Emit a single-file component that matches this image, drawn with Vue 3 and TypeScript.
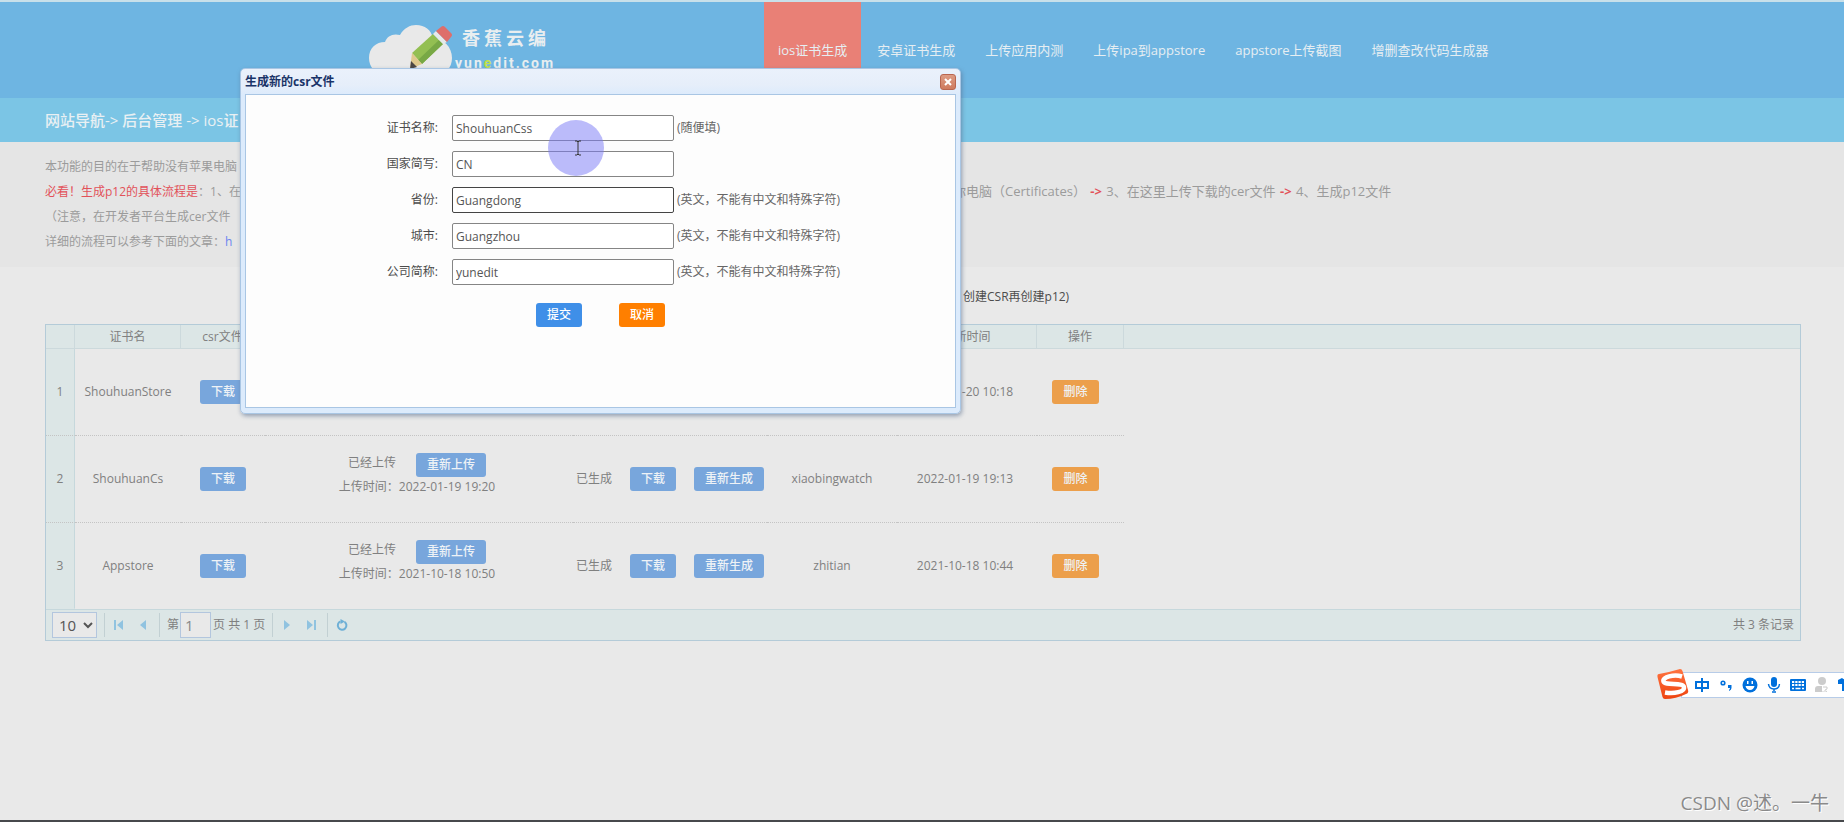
<script setup lang="ts">
import { ref } from 'vue'

interface CertRow {
  name: string
  uploadedAt?: string
  app?: string
  updatedAt: string
}

interface Field {
  id: string
  label: string
  value: string
  hint: string
}

const navItems = ['ios证书生成', '安卓证书生成', '上传应用内测', '上传ipa到appstore', 'appstore上传截图', '增删查改代码生成器']

const rows: CertRow[] = [
  { name: 'ShouhuanStore', updatedAt: '2022-01-20 10:18' },
  { name: 'ShouhuanCs', uploadedAt: '2022-01-19 19:20', app: 'xiaobingwatch', updatedAt: '2022-01-19 19:13' },
  { name: 'Appstore', uploadedAt: '2021-10-18 10:50', app: 'zhitian', updatedAt: '2021-10-18 10:44' },
]

const englishOnly = '(英文，不能有中文和特殊字符)'
const fields = ref<Field[]>([
  { id: 'cert-name', label: '证书名称:', value: 'ShouhuanCss', hint: '(随便填)' },
  { id: 'country', label: '国家简写:', value: 'CN', hint: '' },
  { id: 'province', label: '省份:', value: 'Guangdong', hint: englishOnly },
  { id: 'city', label: '城市:', value: 'Guangzhou', hint: englishOnly },
  { id: 'company', label: '公司简称:', value: 'yunedit', hint: englishOnly },
])
const page = ref('1')
const pageSize = ref('10')
</script>

<template>
  <div class="page">
    <header class="top">
      <div class="top-inner">
        <div class="logo">
          <svg class="cloud" width="86" height="60" viewBox="0 0 86 60" aria-hidden="true">
            <path d="M16 50C6 49 0 42 0 33C0 23 7 17 16 17C18 11 24 8 31 10C35 3 41 0 47 0C56 0 62 5 64 13C75 14 83 22 83 33C83 43 76 50 67 50Z" fill="#e9e9e9" />
            <path d="M64 9L74 19L53 39L43 28Z" fill="#93bf52" />
            <path d="M70 15L74 19L53 39L49 35Z" fill="#78a845" />
            <path d="M43 28L53 39L41 44Z" fill="#dfc98d" />
            <path d="M42 36L48 42L41 44Z" fill="#4c4744" />
            <path d="M67 6L78 17L74 19L64 9Z" fill="#e6e9ea" />
            <path d="M72 2Q74 0 76 2L82 8Q84 10 82 12L78 17L67 6Z" fill="#de6e6b" />
          </svg>
          <div class="brand">
            <span class="brand-cn">香蕉云编</span>
            <span class="brand-en">yun<em>e</em>dit.com</span>
          </div>
        </div>
        <nav class="nav">
          <a v-for="(item, i) in navItems" :key="item" href="#" :class="{ active: i === 0 }">{{ item }}</a>
        </nav>
      </div>
    </header>

    <div class="crumbs">网站导航-&gt; 后台管理 -&gt; ios证</div>

    <section class="info">
      <p>本功能的目的在于帮助没有苹果电脑</p>
      <p class="steps">
        <span><b class="must">必看！生成p12的具体流程是</b>：1、在</span>
        <span class="later">你电脑（Certificates） <b class="arrow">-&gt;</b> 3、在这里上传下载的cer文件 <b class="arrow">-&gt;</b> 4、生成p12文件</span>
      </p>
      <p>（注意，在开发者平台生成cer文件</p>
      <p>详细的流程可以参考下面的文章：<a href="#">h</a></p>
    </section>

    <main class="content">
      <p class="create-note">创建CSR再创建p12)</p>
      <div class="grid">
        <table>
          <colgroup>
            <col class="c-no"><col class="c-name"><col class="c-csr"><col class="c-up"><col class="c-p12"><col class="c-app"><col class="c-time"><col class="c-op"><col>
          </colgroup>
          <thead>
            <tr>
              <th></th><th>证书名</th><th>csr文件</th><th></th><th></th><th></th><th>更新时间</th><th>操作</th><th class="rest"></th>
            </tr>
          </thead>
          <tbody>
            <tr v-for="(row, i) in rows" :key="row.name">
              <td class="no">{{ i + 1 }}</td>
              <td>{{ row.name }}</td>
              <td><button type="button" class="btn">下载</button></td>
              <td class="up">
                <template v-if="row.uploadedAt">
                  <div class="up-line"><span>已经上传</span><button type="button" class="btn">重新上传</button></div>
                  <div>上传时间：{{ row.uploadedAt }}</div>
                </template>
              </td>
              <td>
                <div v-if="row.uploadedAt" class="p12">
                  <span>已生成</span>
                  <button type="button" class="btn">下载</button>
                  <button type="button" class="btn">重新生成</button>
                </div>
              </td>
              <td>{{ row.app }}</td>
              <td class="time">{{ row.updatedAt }}</td>
              <td class="op"><button type="button" class="btn orange">删除</button></td>
              <td class="rest"></td>
            </tr>
          </tbody>
        </table>
        <div class="pager">
          <select v-model="pageSize" aria-label="每页条数"><option>10</option></select>
          <i class="sep"></i>
          <button type="button" class="ico" aria-label="首页"><svg width="10" height="10" viewBox="0 0 10 10"><path d="M0 0h2v10H0zM9 0v10L3 5z" /></svg></button>
          <button type="button" class="ico" aria-label="上一页"><svg width="10" height="10" viewBox="0 0 10 10"><path d="M8 0v10L2 5z" /></svg></button>
          <i class="sep"></i>
          <label for="page-no">第</label>
          <input id="page-no" v-model="page" type="text">
          <span>页 共 1 页</span>
          <i class="sep"></i>
          <button type="button" class="ico" aria-label="下一页"><svg width="10" height="10" viewBox="0 0 10 10"><path d="M2 0v10l6-5z" /></svg></button>
          <button type="button" class="ico" aria-label="末页"><svg width="10" height="10" viewBox="0 0 10 10"><path d="M8 0h2v10H8zM1 0v10l6-5z" /></svg></button>
          <i class="sep"></i>
          <button type="button" class="ico" aria-label="刷新">
            <svg width="12" height="12" viewBox="0 0 12 12"><path d="M4.500 2.400A4.300 4.300 0 1 0 8.500 2.800" fill="none" stroke="#6fb0d6" stroke-width="2" /><path d="M4.500 0l4.500 2.500L4.500 5z" fill="#6fb0d6" /></svg>
          </button>
          <span class="records">共 3 条记录</span>
        </div>
      </div>
    </main>

    <section class="dialog" role="dialog" aria-labelledby="dlg-title">
      <div class="dlg-head">
        <h2 id="dlg-title">生成新的csr文件</h2>
        <button type="button" class="close" aria-label="关闭">
          <svg width="8" height="8" viewBox="0 0 8 8"><path d="M1 1l6 6M7 1L1 7" stroke="#fff" stroke-width="2" /></svg>
        </button>
      </div>
      <form class="dlg-body" @submit.prevent>
        <div v-for="f in fields" :key="f.id" class="field">
          <label :for="f.id">{{ f.label }}</label>
          <input :id="f.id" v-model="f.value" type="text" :class="{ strong: f.id === 'province' }">
          <span>{{ f.hint }}</span>
        </div>
        <div class="actions">
          <button type="submit" class="btn primary">提交</button>
          <button type="button" class="btn cancel">取消</button>
        </div>
      </form>
      <svg class="cursor" width="56" height="56" viewBox="0 0 56 56" aria-hidden="true">
        <circle cx="28" cy="28" r="28" fill="#7777f5" fill-opacity=".5" />
        <path d="M27 21h2l1 1l1-1h2M30 22v12M27 35h2l1-1l1 1h2" fill="none" stroke="#333" stroke-width="1" />
      </svg>
    </section>

    <div class="ime">
      <svg class="sogou" width="32" height="32" viewBox="0 0 32 32" aria-hidden="true">
        <defs><linearGradient id="sg" x1="0" y1="0" x2="0" y2="1"><stop offset="0" stop-color="#ff7440" /><stop offset="1" stop-color="#ee4410" /></linearGradient></defs>
        <path d="M2 5Q13 3 23 0Q25 0 25.500 2L31 21Q32 24 29 25Q19 30 8 30Q6 30 5.500 28L.5 8Q0 5 2 5Z" fill="url(#sg)" />
        <path d="M25 7.500C17 5 5 8 6.500 12.500C8 17 26 13 27 18C28 23 17 25 8 23.500" fill="none" stroke="#fff" stroke-width="4.500" />
      </svg>
      <div class="ime-bar">
        <svg width="16" height="16" viewBox="0 0 16 16"><path d="M2 5h12v6H2zM8 1v14" fill="none" stroke="#0070dc" stroke-width="2" /></svg>
        <svg width="16" height="16" viewBox="0 0 16 16"><circle cx="5" cy="6" r="1.800" fill="none" stroke="#0070dc" stroke-width="1.600" /><path d="M10 8h3.500v3q0 2-2.500 3v-1q1-1 1-2h-2z" fill="#0070dc" /></svg>
        <svg width="16" height="16" viewBox="0 0 16 16"><circle cx="8" cy="8" r="7.500" fill="#0070dc" /><path d="M5 4h1.500v3H5zM9.500 4H11v3H9.500zM3.500 9h9q-1 4-4.500 4T3.500 9z" fill="#fff" /></svg>
        <svg width="16" height="16" viewBox="0 0 16 16"><rect x="5" y="0" width="6" height="10" rx="3" fill="#0070dc" /><path d="M2.500 7q.5 5 5.500 5t5.500-5M8 12v2M6 15h4" fill="none" stroke="#0070dc" stroke-width="1.500" /></svg>
        <svg width="16" height="16" viewBox="0 0 16 16"><rect x="0" y="2" width="16" height="12" rx="1" fill="#0070dc" /><path d="M2 5h12M2 8h12" stroke="#fff" stroke-width="2" stroke-dasharray="2.250 1" /><path d="M2 11.500h2M5.500 11.500h5M12 11.500h2" stroke="#fff" stroke-width="1.500" /></svg>
        <svg width="16" height="16" viewBox="0 0 16 16"><circle cx="8" cy="4" r="4" fill="#ccc" /><path d="M1 15v-3q0-3 3-3h9v6z" fill="#ccc" /><path d="M8 8.500h6v4l-2 2H8z" fill="#fff" /><path d="M9 10h4v2l-2 1v1" fill="none" stroke="#ccc" /></svg>
        <svg width="16" height="16" viewBox="0 0 16 16"><path d="M0 3l4-2q4 3 8 0l4 2v4h-3v7H4V7H0z" fill="#0070dc" /></svg>
      </div>
    </div>

    <div class="watermark">CSDN @述。一牛</div>
  </div>
</template>

<style>
html,
body {
  margin: 0;
  background: #e9e9e9;
}
</style>

<style scoped>
.page {
  position: relative;
  box-sizing: border-box;
  min-height: 100vh;
  overflow: hidden;
  border-top: 2px solid #c8e0ea;
  border-bottom: 2px solid #47494c;
  background: #e9e9e9;
  color: #808080;
  font: 12px/20px "Open Sans", "Noto Sans CJK SC", sans-serif;
}
.page *,
.page *::before {
  box-sizing: border-box;
}
button,
input,
select {
  margin: 0;
  font-family: inherit;
}
p,
h2 {
  margin: 0;
}
.top {
  background: #6eb5e2;
}
.top-inner {
  display: flex;
  max-width: 1106px;
  height: 96px;
  margin: 0 auto;
}
.logo {
  display: flex;
  flex: 0 0 395px;
  padding-top: 23px;
}
.cloud {
  overflow: visible;
}
.brand {
  display: flex;
  flex-direction: column;
  color: #e9eef0;
}
.brand-cn {
  padding-left: 7px;
  font-size: 18px;
  font-weight: 700;
  letter-spacing: 4px;
  line-height: 27px;
}
.brand-en {
  font: bold 14px/22px Roboto, sans-serif;
  letter-spacing: 2px;
}
.brand-en em {
  color: #c2e04c;
  font-style: normal;
}
.nav {
  display: flex;
  gap: 2px;
}
.nav a {
  padding: 0 14px;
  color: #e6eef2;
  font-size: 13px;
  line-height: 96px;
  text-decoration: none;
  white-space: nowrap;
}
.nav .active {
  background: #e98076;
}
.crumbs {
  padding: 0 45px;
  background: #7bc5e5;
  color: #e9f0f3;
  font-size: 15px;
  font-weight: 500;
  line-height: 44px;
}
.info {
  padding: 12px 45px 13px;
  background: #e5e5e5;
  color: #9b9b9b;
  line-height: 25px;
}
.info a {
  color: #6d86f0;
  text-decoration: none;
}
.steps {
  display: grid;
  grid-template-columns: 908px 1fr;
  white-space: nowrap;
}
.later {
  font-size: 13px;
}
.must {
  color: #e2525a;
  font-weight: 400;
}
.arrow {
  padding: 0 1px;
  color: #e2525a;
}
.content {
  padding: 20px 43px 0 45px;
}
.create-note {
  padding: 0 0 17px 918px;
  color: #4c4c4c;
}
.grid {
  border: 1px solid #b4cbd8;
}
table {
  width: 100%;
  border-collapse: separate;
  border-spacing: 0;
  table-layout: fixed;
}
.c-no { width: 29px; }
.c-name { width: 106px; }
.c-csr { width: 84px; }
.c-up { width: 308px; }
.c-p12 { width: 194px; }
.c-app { width: 130px; }
.c-time { width: 140px; }
.c-op { width: 87px; }
th {
  height: 24px;
  padding: 0;
  border-right: 1px solid #ccd9dc;
  border-bottom: 1px solid #ccd9dc;
  background: #dce6e6;
  font-weight: 400;
}
td {
  height: 87px;
  padding: 0;
  border-bottom: 1px dotted #c4c4c4;
  text-align: center;
  white-space: nowrap;
}
tbody tr:last-child td {
  height: 86px;
  border-bottom-color: transparent;
}
.no {
  border-right: 1px solid #c6d8dc;
  background: #dce6e6;
}
tbody .rest {
  border-bottom-color: transparent;
}
th.rest {
  border-right: 0;
}
.up {
  padding: 0 4px 8px 0;
}
.time {
  padding-right: 4px;
}
.op {
  padding-right: 10px;
}
.btn {
  height: 24px;
  padding: 0 11px;
  border: 0;
  border-radius: 3px;
  background: #78a6dc;
  color: #eef2f6;
  font-size: 12px;
  font-weight: 500;
  line-height: 24px;
}
.orange {
  background: #ec9f4b;
}
.up-line {
  display: flex;
  justify-content: center;
  gap: 20px;
}
.p12 {
  display: flex;
  align-items: center;
  padding-left: 3px;
}
.p12 .btn {
  margin-left: 18px;
}
.pager {
  display: flex;
  align-items: center;
  height: 31px;
  padding: 0 6px;
  border-top: 1px solid #c6d8dc;
  background: #dce6e6;
}
.pager select {
  width: 45px;
  height: 26px;
  padding: 0 0 0 2px;
  border: 1px solid #b3c6de;
  background: #e9e9e9;
  color: #555;
  font-size: 15px;
}
.sep {
  width: 1px;
  height: 24px;
  margin: 0 5px 0 7px;
  background: #c2d0d3;
}
.ico {
  display: flex;
  align-items: center;
  justify-content: center;
  width: 18px;
  height: 24px;
  padding: 0;
  border: 0;
  background: none;
  fill: #90c3e0;
}
.ico + .ico {
  margin-left: 6px;
}
.pager input {
  width: 31px;
  height: 26px;
  margin: 0 2px 0 1px;
  padding: 0 4px;
  border: 1px solid #b3c6de;
  background: #e9e9e9;
  color: #888;
  font-size: 15px;
}
.pager label {
  padding-left: 2px;
}
.records {
  margin-left: auto;
}
.dialog {
  position: absolute;
  top: 66px;
  left: 240px;
  width: 721px;
  padding: 0 4px 5px;
  border: 1px solid #a9c6e4;
  border-radius: 5px;
  background: linear-gradient(#eaf1fb, #e6eefa 16px, #dcebfc 26px);
  box-shadow: 1px 2px 4px rgba(90, 110, 140, 0.6);
  color: #4c4c4c;
}
.dlg-head {
  display: flex;
  align-items: center;
  justify-content: space-between;
  height: 25px;
}
.dlg-head h2 {
  color: #1a3468;
  font-size: 12px;
  font-weight: 700;
}
.close {
  display: flex;
  align-items: center;
  justify-content: center;
  width: 16px;
  height: 16px;
  padding: 0;
  border: 1px solid #b9664f;
  border-radius: 3px;
  background: linear-gradient(#dd9c84, #cf7b5e);
}
.dlg-body {
  display: flex;
  flex-direction: column;
  gap: 10px;
  min-height: 314px;
  padding-top: 20px;
  border: 1px solid #a9c6e4;
  background: #fdfdfd;
}
.field {
  display: grid;
  grid-template-columns: 192px 236px 1fr;
  align-items: center;
}
.field label {
  text-align: right;
}
.field input {
  width: 222px;
  height: 26px;
  margin-left: 14px;
  padding: 0 3px;
  border: 1px solid #858585;
  border-radius: 2px;
  background: #fff;
  color: #555;
  font-size: 12px;
}
.field input.strong {
  border-color: #444;
}
.field span {
  padding-left: 3px;
  color: #666;
}
.actions {
  display: flex;
  gap: 37px;
  padding: 8px 0 0 290px;
}
.primary {
  background: #3f8fe8;
  color: #fff;
}
.cancel {
  background: #ff7f00;
  color: #fff;
}
.cursor {
  position: absolute;
  top: 51px;
  left: 307px;
}
.ime {
  position: absolute;
  top: 667px;
  right: 0;
  display: flex;
  align-items: center;
  width: 187px;
}
.sogou {
  position: relative;
  flex: none;
}
.ime-bar {
  display: flex;
  flex: none;
  align-items: center;
  gap: 8px;
  height: 26px;
  margin-left: -8px;
  padding-left: 12px;
  border: 1px solid #b7cce8;
  background: #fff;
}
.ime-bar svg {
  display: block;
  flex: none;
}
.watermark {
  position: absolute;
  right: 15px;
  bottom: 3px;
  color: #8a8a8a;
  font-size: 19px;
  line-height: 28px;
  text-shadow: 1px 1px 0 #fff;
}
</style>
